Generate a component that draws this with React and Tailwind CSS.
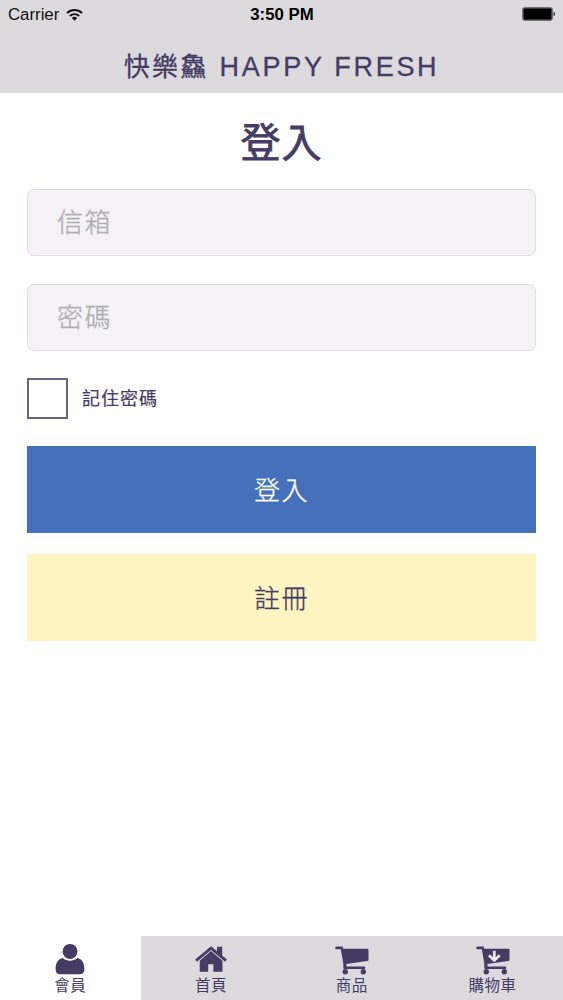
// src/App.jsx
import { useState } from 'react';

function WifiIcon() {
  return (
    <svg className="w-[17px] h-3" viewBox="0 0 17 12" fill="none" stroke="#111" strokeWidth="1.9">
      <path d="M1 4.1a10.8 10.8 0 0 1 15 0" />
      <path d="M3.8 7a6.8 6.8 0 0 1 9.4 0" />
      <path d="M8.5 11.8 5.8 9.1a3.9 3.9 0 0 1 5.4 0Z" fill="#111" stroke="none" />
    </svg>
  );
}

function BatteryIcon() {
  return (
    <svg className="w-[34px] h-[14px]" viewBox="0 0 34 14">
      <rect x="0.5" y="0.5" width="30" height="13" rx="2" fill="none" stroke="#444" strokeWidth="0.7" />
      <rect x="1.3" y="1.3" width="28.4" height="11.4" rx="1" fill="#000" />
      <path d="M31.6 4.8c1.7.5 1.7 3.9 0 4.4Z" fill="#111" />
    </svg>
  );
}

function UserIcon() {
  return (
    <svg className="w-8 h-8" viewBox="0 0 32 32" fill="currentColor">
      <circle cx="16" cy="8.4" r="7.5" />
      <path d="M8.7 14.9c4.2 3.7 10.4 3.7 14.6 0 4.800.8 7.100 5.200 7.100 11 0 3.600-1.600 5.400-4.700 5.400H6.300c-3.100 0-4.700-1.800-4.700-5.400 0-5.800 2.300-10.200 7.100-11Z" />
    </svg>
  );
}

function HomeIcon() {
  return (
    <svg className="w-8 h-8" viewBox="0 0 32 32" fill="currentColor">
      <path d="M16 3.2 22 8.2V3.700h5.200v8.900l4.700 4-1.700 2.100L16 7 1.900 18.700l-1.700-2.100Z" />
      <path d="M16 8.1 27.500 17.800v10.900h-9.100v-7.400h-5.200v7.400H4.700V17.800Z" />
    </svg>
  );
}

function CartIcon({ arrow }) {
  return (
    <svg className="w-[34px] h-8" viewBox="0 0 34 32" fill="currentColor">
      <path d="M1.4 3.600h6.200l.7 2.200h24q1.200 0 1.200 1.100v9.800q0 1.200-1.400 1.400l-20.800 2.800.3 2.700h17.600q1 0 1 1.200t-1 1.200H9.500q-1.200 0-1.200-1.200V20.500L5.800 6.200H1.400q-1.200 0-1.200-1.300t1.200-1.300Z" />
      <circle cx="10.3" cy="28.8" r="2.7" />
      <circle cx="28.3" cy="28.8" r="2.7" />
      {arrow && (
        <path d="M18.3 7.8v9.200M12.900 12.200l5.400 5.200 5.400-5.200" fill="none" stroke="#eeecef" strokeWidth="2.7" />
      )}
    </svg>
  );
}

const tabs = [
  { id: 'member', label: '會員', icon: <UserIcon /> },
  { id: 'home', label: '首頁', icon: <HomeIcon /> },
  { id: 'products', label: '商品', icon: <CartIcon /> },
  { id: 'cart', label: '購物車', icon: <CartIcon arrow /> },
];

const inputClass =
  'block w-full h-[67px] px-[29px] pt-px rounded-[7px] border border-[#dfdde0] bg-[#f4f2f6] text-[26px] font-light [-webkit-text-stroke:0.3px_currentColor] tracking-[1.5px] text-[#453c65] placeholder:text-[#aeacb0] outline-none';

const buttonClass =
  'block w-full h-[87px] pt-[3px] text-[26px] font-light [-webkit-text-stroke:0.3px_currentColor] tracking-[1.5px]';

export default function App() {
  const [activeTab, setActiveTab] = useState('member');
  const [remember, setRemember] = useState(false);

  return (
    <div className="w-full h-screen flex flex-col bg-white text-[#453c65] font-['Liberation_Sans','Noto_Sans_CJK_TC',sans-serif]">
      {/* Header */}
      <header className="h-[93px] shrink-0 bg-[#dcdadd]">
        <div className="h-[29px] pl-2 pr-[7px] grid grid-cols-3 items-center text-[#111]">
          <div className="flex items-center gap-[7px] text-[16.8px] leading-7">
            Carrier
            <WifiIcon />
          </div>
          <div className="text-center text-[16.8px] leading-7 font-bold text-black">3:50 PM</div>
          <div className="flex justify-end pb-px"><BatteryIcon /></div>
        </div>
        <h1 className="pt-[18px] flex justify-center gap-[11px] text-[26px] leading-10 whitespace-nowrap">
          <span className="tracking-[2.3px] [-webkit-text-stroke:0.3px_currentColor]">快樂鱻</span>
          <span className="text-[27px] tracking-[2.7px] [-webkit-text-stroke:0.3px_currentColor]">HAPPY FRESH</span>
        </h1>
      </header>

      {/* Login form */}
      <main className="flex-1 px-[27px]">
        <h2 className="pt-5 h-24 text-center text-[40px] leading-[60px] font-normal tracking-[1px] [-webkit-text-stroke:0.8px_currentColor]">
          登入
        </h2>
        <form onSubmit={(e) => e.preventDefault()}>
          <input type="email" placeholder="信箱" className={inputClass} />
          <input type="password" placeholder="密碼" className={`${inputClass} mt-7`} />
          <label className="mt-[27px] flex items-center gap-[14px] cursor-pointer">
            <input
              type="checkbox"
              checked={remember}
              onChange={() => setRemember(!remember)}
              className="appearance-none w-[41px] h-[41px] border-2 border-[#6a6481] bg-white checked:bg-[#453c65]"
            />
            <span className="pt-[2px] text-[18px] tracking-[1px] [-webkit-text-stroke:0.2px_currentColor]">記住密碼</span>
          </label>
          <button type="submit" className={`${buttonClass} mt-[27px] bg-[#4571ba] text-white`}>
            登入
          </button>
          <button type="button" className={`${buttonClass} mt-[21px] bg-[#fdf5c1]`}>
            註冊
          </button>
        </form>
      </main>

      {/* Bottom tabs */}
      <nav className="h-16 shrink-0 grid grid-cols-4">
        {tabs.map((tab) => (
          <button
            key={tab.id}
            onClick={() => setActiveTab(tab.id)}
            className={`flex flex-col items-center pt-[7px] ${activeTab === tab.id ? 'bg-white' : 'bg-[#dcdadd]'}`}
          >
            {tab.icon}
            <span className="pt-px text-[15.5px] leading-5 tracking-[0.5px]">{tab.label}</span>
          </button>
        ))}
      </nav>
    </div>
  );
}
